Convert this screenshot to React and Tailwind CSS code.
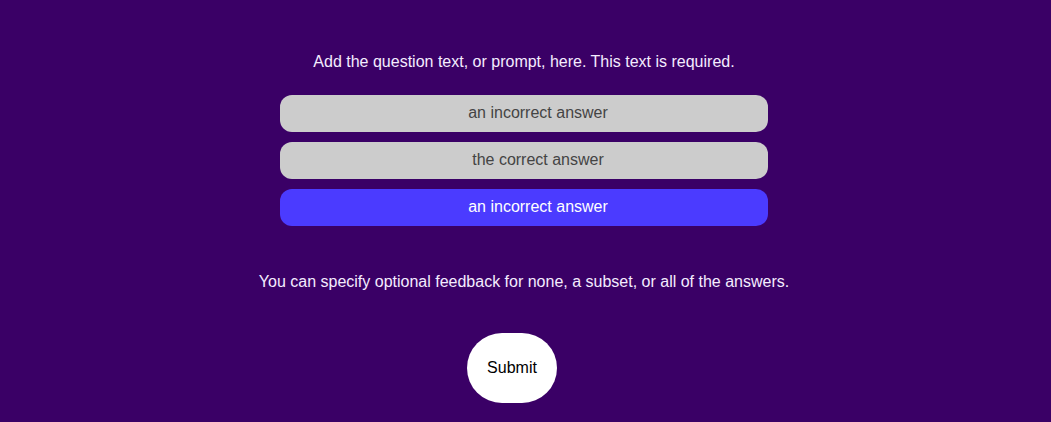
export default function App() {
  const answers = [
    { text: "an incorrect answer", selected: false },
    { text: "the correct answer", selected: false },
    { text: "an incorrect answer", selected: true },
  ];
  return (
    <div
      className="w-[1051px] h-[422px] bg-[#3a0066] flex flex-col items-center overflow-hidden"
      style={{ fontFamily: '"Liberation Sans", Arial, sans-serif' }}
    >
      <p className="mt-[53px] text-[16px] leading-[18px] text-[#f4ecff] ml-[-3px]">
        Add the question text, or prompt, here. This text is required.
      </p>
      <div className="mt-[24px] flex flex-col gap-[10px] w-[488px] ml-[-3px]">
        {answers.map((a, i) => (
          <div
            key={i}
            className={
              a.selected
                ? "h-[37px] pl-[28px] pb-[1px] rounded-[12px] bg-[#4b3bff] text-white text-[16px] flex items-center justify-center"
                : "h-[37px] pl-[28px] pb-[1px] rounded-[12px] bg-[#cccccc] text-[#444444] text-[16px] flex items-center justify-center"
            }
          >
            {a.text}
          </div>
        ))}
      </div>
      <p className="mt-[47px] text-[16px] leading-[18px] text-[#f4ecff] ml-[-3px]">
        You can specify optional feedback for none, a subset, or all of the answers.
      </p>
      <button className="mt-[42px] w-[90px] h-[70px] rounded-[35px] bg-white text-black text-[16px] ml-[-27px]">
        Submit
      </button>
    </div>
  );
}
